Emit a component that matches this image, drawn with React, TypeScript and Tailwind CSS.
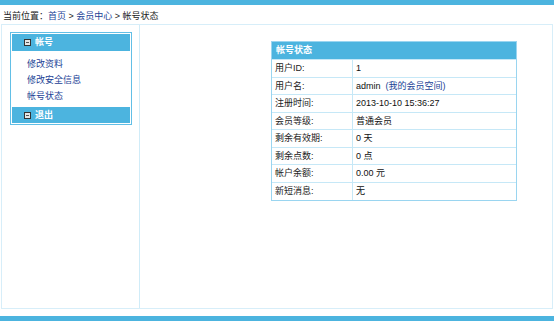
import React from "react";

const font = { fontFamily: '"Liberation Sans", "Noto Sans CJK SC", sans-serif' };

function SqIcon() {
  return (
    <span className="inline-block w-[7px] h-[7px] border border-[#333] bg-[#e6e6e6] mr-[4px] relative">
      <span className="absolute left-[1px] right-[1px] top-[2px] h-[1px] bg-[#555]" />
    </span>
  );
}

const rows: [string, React.ReactNode][] = [
  ["用户ID:", "1"],
  [
    "用户名:",
    <>
      admin&nbsp;&nbsp;
      <span className="text-[#1b3f96]">(我的会员空间)</span>
    </>,
  ],
  ["注册时间:", "2013-10-10 15:36:27"],
  ["会员等级:", "普通会员"],
  ["剩余有效期:", "0 天"],
  ["剩余点数:", "0 点"],
  ["帐户余额:", "0.00 元"],
  ["新短消息:", "无"],
];

export default function App() {
  return (
    <div
      className="w-[554px] h-[322px] bg-white flex flex-col text-[9px] text-[#222] leading-none overflow-hidden"
      style={font}
    >
      <div className="h-[5px] bg-[#4cb4df]" />
      <div className="h-[19px] flex items-center pl-[3px] pt-[4px] text-[#222]">
        当前位置：<span className="text-[#1b3f96]">首页</span>&nbsp;&gt;&nbsp;
        <span className="text-[#1b3f96]">会员中心</span>&nbsp;&gt;&nbsp;帐号状态
      </div>
      <div className="h-[285px] mx-[1px] border border-[#d7eef9] flex">
        <div className="w-[138px] border-r border-[#d0ecf8] pt-[7px] pl-[8px] shrink-0">
          <div className="w-[122px] border border-[#62bfe6] p-[1px] bg-white">
            <div className="h-[17px] bg-[#4cb4df] flex items-center pl-[12px] text-white font-bold">
              <SqIcon />
              帐号
            </div>
            <div className="h-[56px] flex flex-col justify-center gap-[7px] pl-[15px] pt-[2px] text-[#1b3f96]">
              <span>修改资料</span>
              <span>修改安全信息</span>
              <span>帐号状态</span>
            </div>
            <div className="h-[16px] bg-[#4cb4df] flex items-center pl-[12px] text-white font-bold">
              <SqIcon />
              退出
            </div>
          </div>
        </div>
        <div className="flex-1 pt-[16px] pl-[131px]">
          <div className="w-[246px] border border-[#9ad5f0] bg-white">
            <div className="h-[18px] bg-[#4cb4df] flex items-center pl-[4px] text-white font-bold border-b border-[#c6e8f7]">
              帐号状态
            </div>
            {rows.map(([k, v], i) => (
              <div
                key={i}
                className={`flex ${i % 2 === 0 ? "h-[18px]" : "h-[17px]"} ${i < rows.length - 1 ? "border-b border-[#c6e8f7]" : ""}`}
              >
                <div className="w-[81px] border-r border-[#c6e8f7] flex items-center pl-[3px] text-[#222]">
                  {k}
                </div>
                <div className="flex-1 flex items-center pl-[3px] text-[#111]">{v}</div>
              </div>
            ))}
          </div>
        </div>
      </div>
      <div className="h-[7px]" />
      <div className="h-[5px] bg-[#4cb4df]" />
    </div>
  );
}
